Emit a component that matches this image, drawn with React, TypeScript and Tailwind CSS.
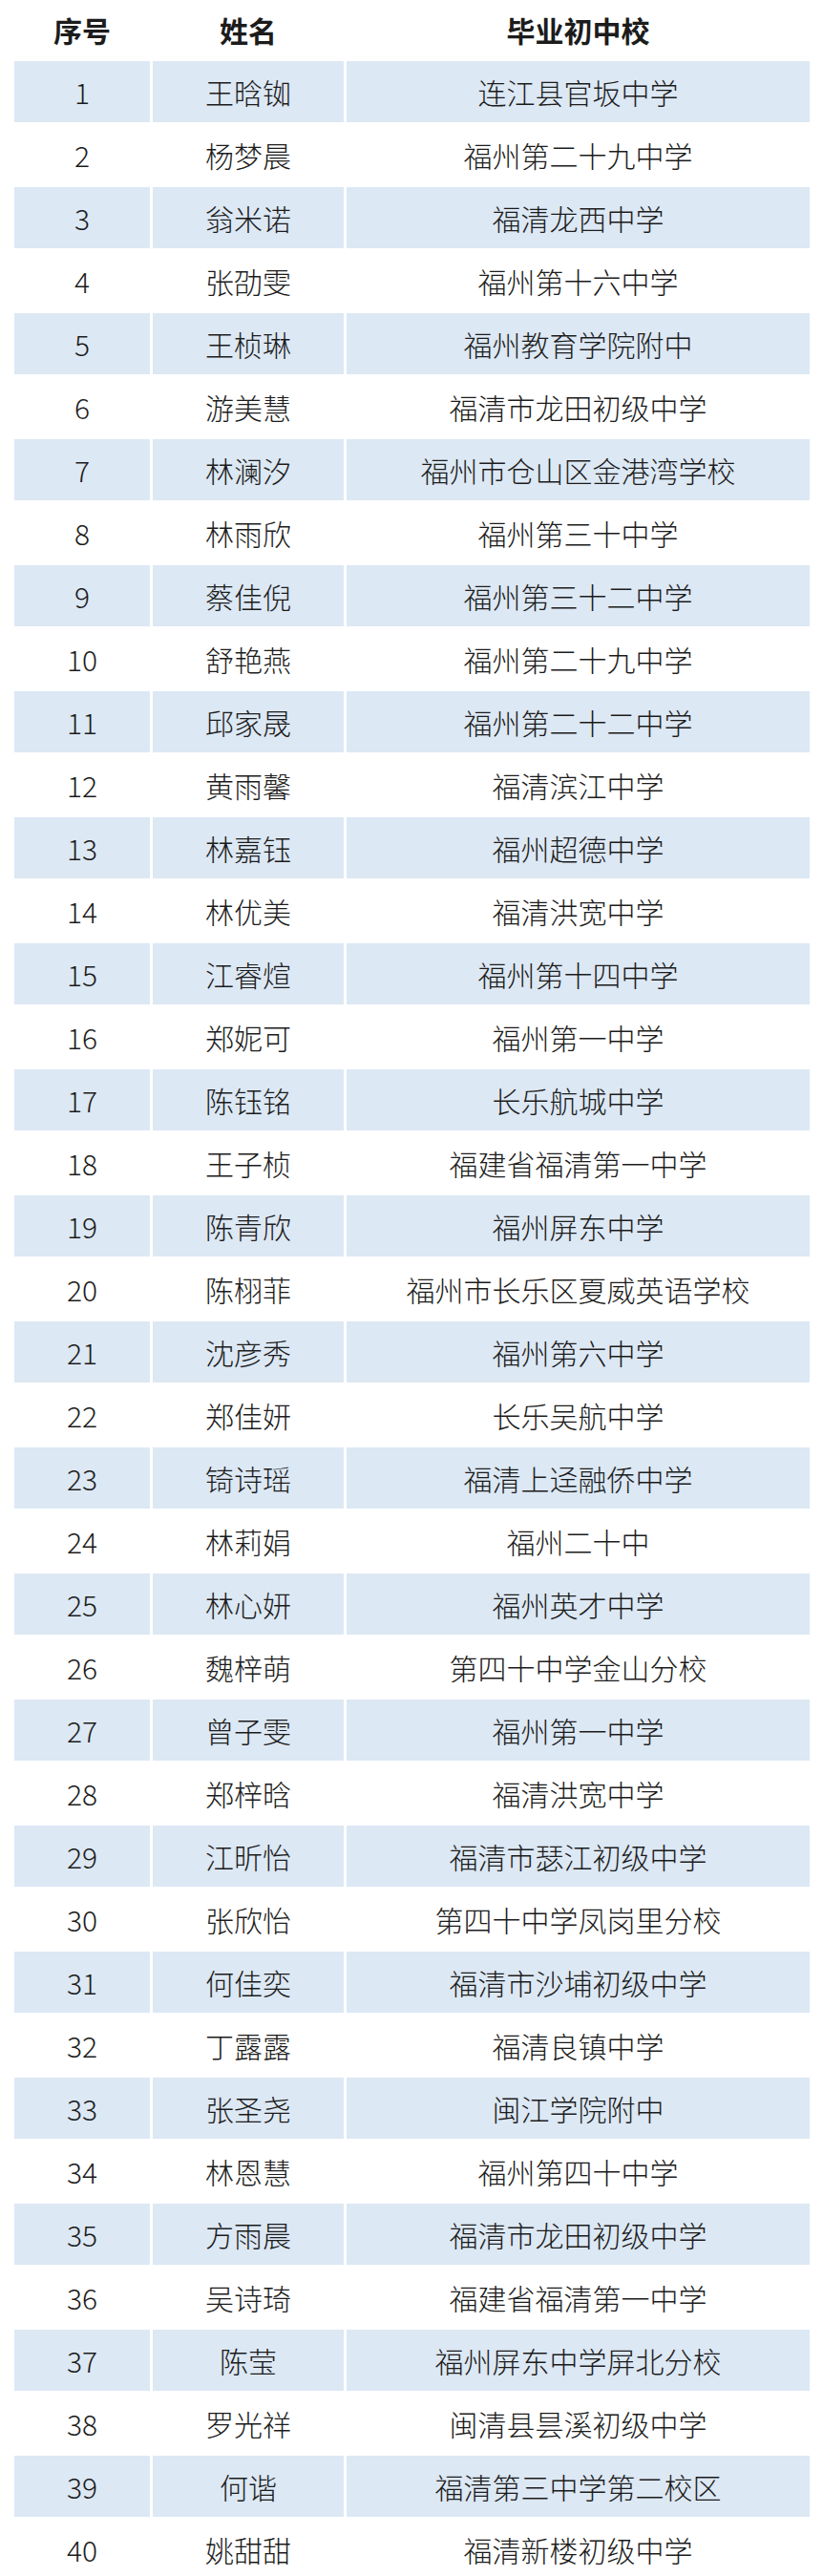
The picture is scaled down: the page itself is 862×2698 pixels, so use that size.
const rows: [string, string][] = [
  ["王晗铷", "连江县官坂中学"],
  ["杨梦晨", "福州第二十九中学"],
  ["翁米诺", "福清龙西中学"],
  ["张劭雯", "福州第十六中学"],
  ["王桢琳", "福州教育学院附中"],
  ["游美慧", "福清市龙田初级中学"],
  ["林澜汐", "福州市仓山区金港湾学校"],
  ["林雨欣", "福州第三十中学"],
  ["蔡佳倪", "福州第三十二中学"],
  ["舒艳燕", "福州第二十九中学"],
  ["邱家晟", "福州第二十二中学"],
  ["黄雨馨", "福清滨江中学"],
  ["林嘉钰", "福州超德中学"],
  ["林优美", "福清洪宽中学"],
  ["江睿煊", "福州第十四中学"],
  ["郑妮可", "福州第一中学"],
  ["陈钰铭", "长乐航城中学"],
  ["王子桢", "福建省福清第一中学"],
  ["陈青欣", "福州屏东中学"],
  ["陈栩菲", "福州市长乐区夏威英语学校"],
  ["沈彦秀", "福州第六中学"],
  ["郑佳妍", "长乐吴航中学"],
  ["锜诗瑶", "福清上迳融侨中学"],
  ["林莉娟", "福州二十中"],
  ["林心妍", "福州英才中学"],
  ["魏梓萌", "第四十中学金山分校"],
  ["曾子雯", "福州第一中学"],
  ["郑梓晗", "福清洪宽中学"],
  ["江昕怡", "福清市瑟江初级中学"],
  ["张欣怡", "第四十中学凤岗里分校"],
  ["何佳奕", "福清市沙埔初级中学"],
  ["丁露露", "福清良镇中学"],
  ["张圣尧", "闽江学院附中"],
  ["林恩慧", "福州第四十中学"],
  ["方雨晨", "福清市龙田初级中学"],
  ["吴诗琦", "福建省福清第一中学"],
  ["陈莹", "福州屏东中学屏北分校"],
  ["罗光祥", "闽清县昙溪初级中学"],
  ["何谐", "福清第三中学第二校区"],
  ["姚甜甜", "福清新楼初级中学"],
];

const font = { fontFamily: '"Noto Sans CJK SC", "Noto Sans", sans-serif' };

export default function App() {
  return (
    <div className="w-[862px] h-[2698px] overflow-hidden bg-white px-[15px] text-[#1c1c1c]" style={font}>
      {/* header */}
      <div className="grid grid-cols-[142px_200px_485px] gap-x-[3px] h-[63px] items-center text-[30px] font-bold">
        <div className="text-center">序号</div>
        <div className="text-center">姓名</div>
        <div className="text-center">毕业初中校</div>
      </div>

      {rows.map(([name, school], i) => {
        const bg = i % 2 === 0 ? "bg-[#dce8f4]" : "bg-white";
        return (
          <div key={i} className="grid grid-cols-[142px_200px_485px] gap-x-[3px] h-[66px] py-[1px] text-[30px] font-light leading-none">
            <div className={`${bg} flex items-center justify-center`}>{i + 1}</div>
            <div className={`${bg} flex items-center justify-center`}>{name}</div>
            <div className={`${bg} flex items-center justify-center`}>{school}</div>
          </div>
        );
      })}
    </div>
  );
}
